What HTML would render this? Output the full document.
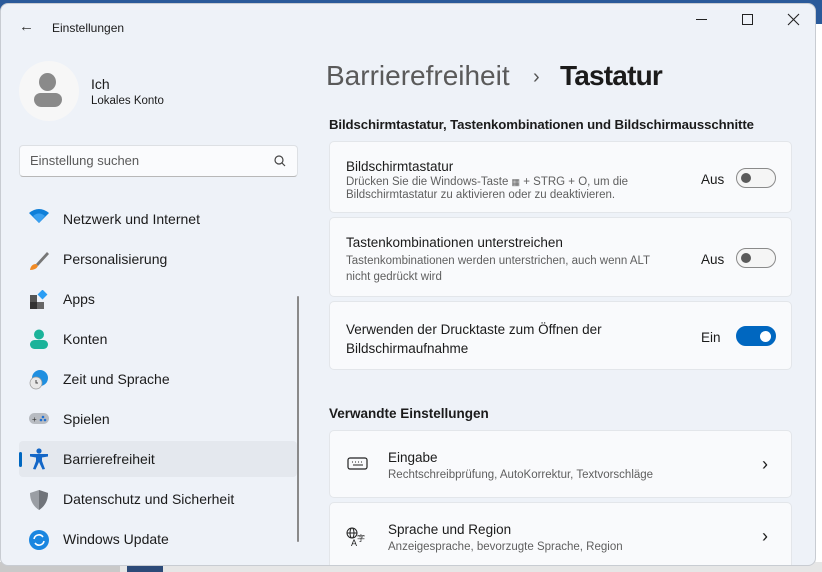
<!DOCTYPE html>
<html><head><meta charset="utf-8"><style>
*{margin:0;padding:0;box-sizing:border-box}
body{width:822px;height:572px;overflow:hidden;position:relative;background:#f4f4f4;font-family:"Segoe UI","Liberation Sans",sans-serif;color:#1b1b1b}
.bgtop{position:absolute;left:0;top:0;width:822px;height:24px;background:#2a5a9a}
.bgright{position:absolute;left:816px;top:24px;width:6px;height:548px;background:#fff}
.bgbot{position:absolute;left:0;top:562px;width:822px;height:10px;background:#c9c9c9}
.bgbot2{position:absolute;left:120px;top:562px;width:702px;height:10px;background:#e6e6e6}
.bgbot3{position:absolute;left:127px;top:562px;width:36px;height:10px;background:#2c4a78}
.win{position:absolute;left:0;top:3px;width:816px;height:563px;background:#eef2f8;border-radius:8px;border:1px solid #c8ccd2;overflow:hidden}
.t{position:absolute;white-space:nowrap}
.card{position:absolute;left:328px;width:463px;background:#f9fafc;border:1px solid #e3e6ea;border-radius:5px}
.tog{position:absolute;left:735px;width:40px;height:20px;border-radius:10px;border:1px solid #8a8a8a;background:#f5f5f5}
.tog::after{content:"";position:absolute;left:4px;top:4px;width:10px;height:10px;border-radius:50%;background:#5a5a5a}
.on{background:#0067c0;border-color:#0067c0}
.on::after{left:23px;background:#fff;width:11px;height:11px;top:3.5px}
.nav{position:absolute;left:62px;font-size:14px;color:#1b1b1b}
.s{font-size:11.5px;color:#5f5f5f;line-height:13px}
</style></head><body>
<div class="bgtop"></div><div class="bgright"></div>
<div class="bgbot"></div><div class="bgbot2"></div><div class="bgbot3"></div>
<div class="win">
<div class="t" style="left:18px;top:14px;font-size:15px;color:#333">←</div>
<div class="t" style="left:51px;top:17px;font-size:12px">Einstellungen</div>
<div style="position:absolute;left:695px;top:15px;width:11px;height:1px;background:#222"></div>
<div style="position:absolute;left:741px;top:10px;width:11px;height:11px;border:1px solid #222"></div>
<svg style="position:absolute;left:786px;top:9px" width="13" height="13"><path d="M1 1L12 12M12 1L1 12" stroke="#222" stroke-width="1.1"/></svg>

<div style="position:absolute;left:18px;top:57px;width:60px;height:60px;border-radius:50%;background:#f7f7f7"></div>
<div style="position:absolute;left:38px;top:69px;width:17px;height:18px;border-radius:50%;background:#8a8a8a"></div>
<div style="position:absolute;left:33px;top:89px;width:28px;height:14px;border-radius:7px 7px 8px 8px;background:#8a8a8a"></div>
<div class="t" style="left:90px;top:72px;font-size:14px">Ich</div>
<div class="t" style="left:90px;top:91px;font-size:11.5px">Lokales Konto</div>

<div style="position:absolute;left:18px;top:141px;width:279px;height:32px;background:#fafbfd;border:1px solid #dde0e4;border-bottom-color:#b8b8b8;border-radius:4px"></div>
<div class="t" style="left:29px;top:149px;font-size:13px;color:#5a5a5a">Einstellung suchen</div>
<svg style="position:absolute;left:272px;top:150px" width="14" height="14"><circle cx="6" cy="6" r="4" fill="none" stroke="#444" stroke-width="1.2"/><line x1="9" y1="9" x2="12" y2="12" stroke="#444" stroke-width="1.2"/></svg>

<svg style="position:absolute;left:27px;top:204px" width="22" height="16"><path d="M1 5 Q11 -3 21 5 L11 15 Z" fill="#0f7fd8"/><path d="M5 8 Q11 3 17 8 L11 15Z" fill="#3aa0f0"/></svg>
<div class="nav" style="top:207px">Netzwerk und Internet</div>
<svg style="position:absolute;left:27px;top:246px" width="22" height="22"><path d="M19 2 L8 14 L10 16 L21 4Z" fill="#777"/><path d="M8 14 Q3 14 2 20 Q8 20 10 16Z" fill="#f08a24"/></svg>
<div class="nav" style="top:247px">Personalisierung</div>
<svg style="position:absolute;left:28px;top:286px" width="20" height="20"><rect x="1" y="5" width="7" height="7" fill="#555"/><rect x="1" y="12" width="7" height="7" fill="#333"/><rect x="8" y="12" width="7" height="7" fill="#666"/><rect x="10" y="1" width="7" height="7" fill="#2a9df4" transform="rotate(45 13.5 4.5)"/></svg>
<div class="nav" style="top:287px">Apps</div>
<svg style="position:absolute;left:28px;top:325px" width="20" height="20"><circle cx="10" cy="5.5" r="5" fill="#1bb39a"/><rect x="1" y="11" width="18" height="9" rx="4.5" fill="#1bb39a"/></svg>
<div class="nav" style="top:327px">Konten</div>
<svg style="position:absolute;left:27px;top:365px" width="22" height="22"><circle cx="12" cy="9" r="8" fill="#1f8fe0"/><circle cx="8" cy="14" r="6" fill="#e8e8e8" stroke="#999" stroke-width="0.7"/><path d="M8 11 V14 H10" stroke="#444" fill="none"/></svg>
<div class="nav" style="top:367px">Zeit und Sprache</div>
<svg style="position:absolute;left:27px;top:408px" width="22" height="14"><rect x="1" y="1" width="20" height="11" rx="5.5" fill="#b8bcc2"/><text x="4" y="10" font-size="8" fill="#333">+</text><circle cx="15" cy="5" r="1.3" fill="#1f6fd0"/><circle cx="13" cy="8" r="1.3" fill="#1f6fd0"/><circle cx="17" cy="8" r="1.3" fill="#1f6fd0"/></svg>
<div class="nav" style="top:407px">Spielen</div>

<div style="position:absolute;left:18px;top:437px;width:278px;height:36px;background:#e4e8ee;border-radius:4px"></div>
<div style="position:absolute;left:18px;top:448px;width:3px;height:15px;background:#0067c0;border-radius:2px"></div>
<svg style="position:absolute;left:28px;top:444px" width="20" height="22"><circle cx="10" cy="3" r="2.6" fill="#1467c7"/><path d="M1 6 L19 6 L19 8.5 L13 9.5 L13 13 L16 21 L13.5 21.5 L10 14 L6.5 21.5 L4 21 L7 13 L7 9.5 L1 8.5Z" fill="#1467c7"/></svg>
<div class="nav" style="top:447px">Barrierefreiheit</div>
<svg style="position:absolute;left:28px;top:485px" width="20" height="22"><path d="M10 1 L19 4 Q19 15 10 21 Q1 15 1 4Z" fill="#9a9ea4"/><path d="M10 1 L19 4 Q19 15 10 21Z" fill="#70747a"/></svg>
<div class="nav" style="top:487px">Datenschutz und Sicherheit</div>
<svg style="position:absolute;left:27px;top:525px" width="22" height="22"><circle cx="11" cy="11" r="10" fill="#1a86e0"/><path d="M6 10 A5 5 0 0 1 15 8 M16 12 A5 5 0 0 1 7 14" stroke="#fff" stroke-width="1.6" fill="none"/></svg>
<div class="nav" style="top:527px">Windows Update</div>
<div style="position:absolute;left:296px;top:292px;width:2px;height:246px;background:#8a8a8a;border-radius:1px"></div>

<div class="t" style="left:325px;top:56px;font-size:28px;color:#5a5a5a">Barrierefreiheit</div>
<div class="t" style="left:532px;top:62px;font-size:20px;color:#555">›</div>
<div class="t" style="left:559px;top:56px;font-size:28px;font-weight:600;color:#1b1b1b;letter-spacing:-0.8px">Tastatur</div>
<div class="t" style="left:328px;top:113px;font-size:13.2px;font-weight:600;letter-spacing:-0.1px">Bildschirmtastatur, Tastenkombinationen und Bildschirmausschnitte</div>

<div class="card" style="top:137px;height:72px"></div>
<div class="t" style="left:345px;top:155px;font-size:13.5px">Bildschirmtastatur</div>
<div class="t s" style="left:345px;top:172px">Drücken Sie die Windows-Taste <span style="font-size:9px">▦</span> + STRG + O, um die<br>Bildschirmtastatur zu aktivieren oder zu deaktivieren.</div>
<div class="t" style="left:700px;top:168px;font-size:13.5px">Aus</div>
<div class="tog" style="top:164px"></div>

<div class="card" style="top:213px;height:80px"></div>
<div class="t" style="left:345px;top:231px;font-size:13.5px">Tastenkombinationen unterstreichen</div>
<div class="t s" style="left:345px;top:249px;line-height:16px">Tastenkombinationen werden unterstrichen, auch wenn ALT<br>nicht gedrückt wird</div>
<div class="t" style="left:700px;top:248px;font-size:13.5px">Aus</div>
<div class="tog" style="top:244px"></div>

<div class="card" style="top:297px;height:69px"></div>
<div class="t" style="left:345px;top:316px;font-size:13.5px;line-height:19px">Verwenden der Drucktaste zum Öffnen der<br>Bildschirmaufnahme</div>
<div class="t" style="left:700px;top:326px;font-size:13.5px">Ein</div>
<div class="tog on" style="top:322px"></div>

<div class="t" style="left:328px;top:402px;font-size:13.5px;font-weight:600">Verwandte Einstellungen</div>
<div class="card" style="top:426px;height:68px"></div>
<svg style="position:absolute;left:346px;top:453px" width="22" height="14"><rect x="1" y="1" width="19" height="11" rx="2" fill="none" stroke="#222" stroke-width="1.2"/><path d="M5 5h1M8 5h1M11 5h1M14 5h1M6 8h10" stroke="#222"/></svg>
<div class="t" style="left:387px;top:446px;font-size:13.5px">Eingabe</div>
<div class="t s" style="left:387px;top:465px">Rechtschreibprüfung, AutoKorrektur, Textvorschläge</div>
<div class="t" style="left:761px;top:450px;font-size:18px">›</div>

<div class="card" style="top:498px;height:70px"></div>
<svg style="position:absolute;left:345px;top:523px" width="20" height="20"><circle cx="6" cy="6" r="5" fill="none" stroke="#222"/><ellipse cx="6" cy="6" rx="2" ry="5" fill="none" stroke="#222"/><path d="M1 6h10" stroke="#222"/><text x="5" y="19" font-size="9" fill="#222" font-family="Liberation Sans">A</text><text x="11" y="14" font-size="8" fill="#222" font-family="Noto Sans CJK SC">字</text></svg>
<div class="t" style="left:387px;top:518px;font-size:13.5px">Sprache und Region</div>
<div class="t s" style="left:387px;top:537px">Anzeigesprache, bevorzugte Sprache, Region</div>
<div class="t" style="left:761px;top:522px;font-size:18px">›</div>
</div>
</body></html>
